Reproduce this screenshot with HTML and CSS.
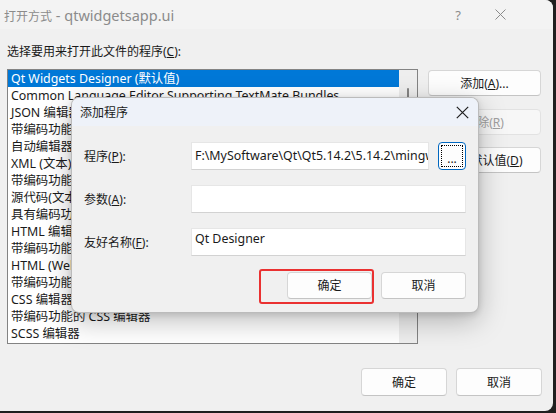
FILE: index.html
```html
<!DOCTYPE html>
<html lang="zh-CN">
<head>
<meta charset="utf-8">
<title>打开方式</title>
<link rel="stylesheet" href="styles.css">
</head>
<body>
<div class="window">
  <div class="titlebar">
    <span class="title">打开方式<span class="title-latin"> - qtwidgetsapp.ui</span></span>
    <span class="cap help">?</span>
    <span class="cap close">
      <svg width="11" height="11" viewBox="0 0 11 11"><path d="M0.5 0.5 L10.5 10.5 M10.5 0.5 L0.5 10.5" stroke="#8b8b8b" stroke-width="1" fill="none"/></svg>
    </span>
  </div>
  <div class="content">
    <div class="prompt">选择要用来打开此文件的程序(<u>C</u>):</div>
    <div class="main-row">
      <div class="list">
        <div class="items">
          <div class="item selected">Qt Widgets Designer (默认值)</div>
          <div class="item">Common Language Editor Supporting TextMate Bundles</div>
          <div class="item">JSON 编辑器</div>
          <div class="item">带编码功能的 JSON 编辑器</div>
          <div class="item">自动编辑器选择器(XML)</div>
          <div class="item">XML (文本)编辑器</div>
          <div class="item">带编码功能的 XML (文本)编辑器</div>
          <div class="item">源代码(文本)编辑器</div>
          <div class="item">具有编码功能的源代码(文本)编辑器</div>
          <div class="item">HTML 编辑器</div>
          <div class="item">带编码功能的 HTML 编辑器</div>
          <div class="item">HTML (Web 窗体)编辑器</div>
          <div class="item">带编码功能的 HTML (Web 窗体)编辑器</div>
          <div class="item">CSS 编辑器</div>
          <div class="item">带编码功能的 CSS 编辑器</div>
          <div class="item">SCSS 编辑器</div>
        </div>
        <div class="scrollbar"><div class="thumb"></div></div>
      </div>
      <div class="side">
        <button class="btn side-btn first">添加(<u>A</u>)...</button>
        <button class="btn side-btn second disabled">移除(<u>R</u>)</button>
        <button class="btn side-btn third">设为默认值(<u>D</u>)</button>
      </div>
    </div>
    <div class="footer">
      <button class="btn footer-btn">确定</button>
      <button class="btn footer-btn">取消</button>
    </div>
  </div>

  <div class="dialog">
    <div class="dlg-title">
      <span class="dlg-title-text">添加程序</span>
      <span class="dlg-close">
        <svg width="13" height="13" viewBox="0 0 13 13"><path d="M0.8 0.8 L12.2 12.2 M12.2 0.8 L0.8 12.2" stroke="#1f1f1f" stroke-width="1.2" fill="none"/></svg>
      </span>
    </div>
    <div class="dlg-body">
      <div class="field-label">程序(<u>P</u>):</div>
      <div class="field-row">
        <div class="input path">F:\MySoftware\Qt\Qt5.14.2\5.14.2\mingw73_64\bin\designer.exe</div>
        <button class="dots">...</button>
      </div>
      <div class="field-label">参数(<u>A</u>):</div>
      <div class="input"></div>
      <div class="field-label">友好名称(<u>F</u>):</div>
      <div class="input name">Qt Designer</div>
      <div class="dlg-buttons">
        <button class="btn dlg-btn">确定</button>
        <button class="btn dlg-btn">取消</button>
      </div>
    </div>
    <div class="highlight"></div>
  </div>
</div>
</body>
</html>
```

FILE: styles.css
```css
* { box-sizing: border-box; }

body {
  margin: 0;
  width: 556px;
  height: 413px;
  overflow: hidden;
  background: #202020;
  font-family: "Noto Sans", "Noto Sans CJK SC", sans-serif;
  color: #1a1a1a;
}

u { text-decoration: underline; text-underline-offset: 1px; }

.window {
  position: relative;
  width: 553px;
  height: 411px;
  background: #f0f0f0;
  border-radius: 0 8px 8px 0;
  overflow: hidden;
}

.titlebar {
  height: 29px;
  background: #f3f3f3;
  display: flex;
  align-items: center;
  padding-left: 4px;
  color: #8b8b8b;
  font-size: 12px;
}
.title { flex: 1; white-space: nowrap; }
.title-latin { font-size: 14.5px; }
.cap {
  width: 42px;
  height: 29px;
  display: flex;
  align-items: center;
  justify-content: center;
}
.help { font-size: 13px; color: #8b8b8b; }
.close { margin-right: 32px; }

.content {
  padding: 15px 11px 0 7px;
}
.prompt {
  font-size: 12px;
  line-height: 16px;
  height: 16px;
  white-space: nowrap;
}

.main-row {
  margin-top: 9px;
  display: flex;
  gap: 10px;
}

.list {
  width: 411px;
  height: 275px;
  border: 1px solid #838383;
  background: #ffffff;
  display: flex;
}
.items {
  flex: 1;
  overflow: hidden;
}
.item {
  height: 17px;
  line-height: 17px;
  padding-left: 3px;
  font-size: 12.4px;
  white-space: nowrap;
  overflow: hidden;
}
.item.selected {
  background: #0078d7;
  color: #ffffff;
}
.scrollbar {
  width: 18px;
  background: #eeeeee;
  padding-top: 18px;
  padding-left: 8px;
}
.thumb {
  width: 2px;
  height: 140px;
  border-radius: 1px;
  background: #858585;
}

.side {
  width: 113px;
  display: flex;
  flex-direction: column;
}

.btn {
  font-family: inherit;
  font-size: 12px;
  color: #1a1a1a;
  background: #fdfdfd;
  border: 1px solid #d6d6d6;
  border-bottom-color: #c4c4c4;
  border-radius: 4px;
  padding: 0;
  display: flex;
  align-items: center;
  justify-content: center;
  white-space: nowrap;
}
.btn.disabled {
  color: #a0a0a0;
  background: #f7f7f7;
  border-color: #e2e2e2;
}

.side-btn { width: 113px; height: 26px; }
.side-btn.first { margin-top: 1px; }
.side-btn.second { margin-top: 13px; }
.side-btn.third { margin-top: 12px; }

.footer {
  margin-top: 24px;
  display: flex;
  justify-content: flex-end;
  gap: 9px;
}
.footer-btn { width: 86px; height: 28px; }

/* modal dialog over the main window */
.dialog {
  position: absolute;
  left: 71px;
  top: 97px;
  width: 408px;
  height: 216px;
  background: #f0f0f0;
  border: 1px solid rgba(0, 0, 0, 0.22);
  border-radius: 8px;
  box-shadow: 0 8px 28px rgba(0, 0, 0, 0.26), 0 2px 6px rgba(0, 0, 0, 0.12);
}
.dlg-title {
  height: 28px;
  background: #eef2f9;
  border-radius: 7px 7px 0 0;
  display: flex;
  align-items: center;
  padding-left: 8px;
  font-size: 12px;
}
.dlg-title-text { flex: 1; }
.dlg-close {
  width: 32px;
  height: 28px;
  display: flex;
  align-items: center;
  justify-content: center;
}

.dlg-body {
  padding: 16px 12px 0 12px;
  display: grid;
  grid-template-columns: 107px 1fr;
  grid-auto-rows: 28px;
  row-gap: 15px;
  align-items: center;
}
.field-label {
  font-size: 12px;
  white-space: nowrap;
}
.field-row {
  display: flex;
  gap: 9px;
  height: 28px;
}
.input {
  height: 28px;
  background: #ffffff;
  border: 1px solid #e6e6e6;
  border-bottom-color: #d2d2d2;
  padding-left: 3px;
  font-size: 12.4px;
  line-height: 26px;
  white-space: nowrap;
  overflow: hidden;
}
.input.path { width: 238px; }
.input.name { line-height: 20px; }
.dots {
  position: relative;
  width: 28px;
  height: 28px;
  background: #fdfdfd;
  border: 1px solid #0067c0;
  border-radius: 4px;
  font-family: inherit;
  font-size: 12px;
  line-height: 12px;
  padding: 6px 0 0 0;
  color: #1a1a1a;
}
.dots::after {
  content: "";
  position: absolute;
  left: 2px;
  top: 2px;
  right: 2px;
  bottom: 2px;
  border: 1px dotted #000000;
}

.dlg-buttons {
  grid-column: 1 / 3;
  display: flex;
  justify-content: flex-end;
  gap: 9px;
  height: 27px;
}
.dlg-btn { width: 85px; height: 27px; }

/* red annotation frame */
.highlight {
  position: absolute;
  left: 187px;
  top: 171px;
  width: 115px;
  height: 35px;
  border: 2px solid #ea3131;
  border-radius: 3px;
}
```
